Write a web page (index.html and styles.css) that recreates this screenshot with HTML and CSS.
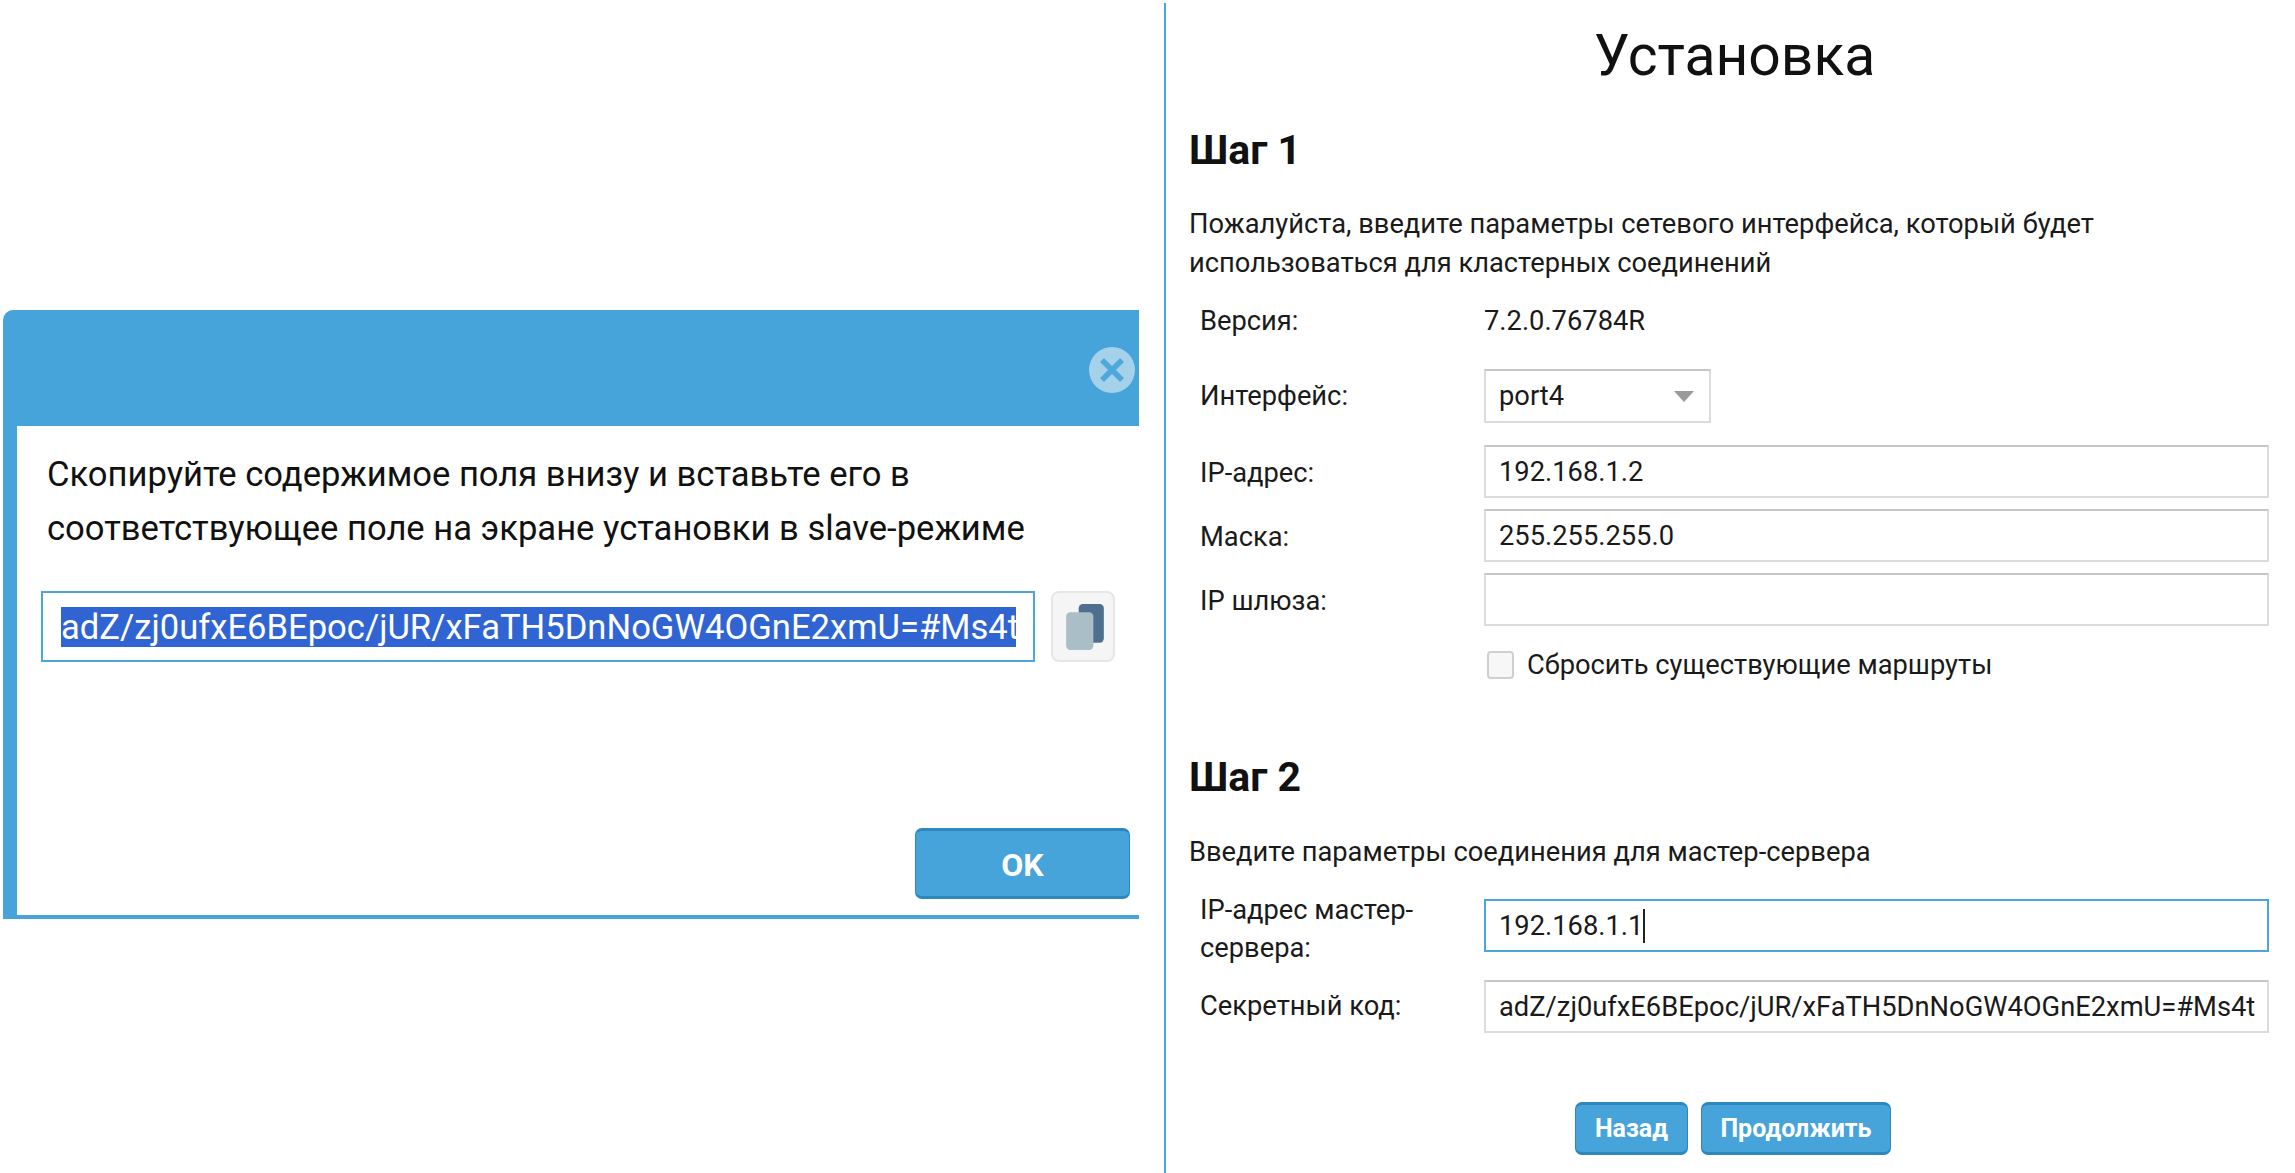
FILE: index.html
```html
<!DOCTYPE html>
<html lang="ru">
<head>
<meta charset="utf-8">
<title>Установка</title>
<link rel="stylesheet" href="styles.css">
</head>
<body>
<div class="page">
  <section class="left">
    <div class="dialog">
      <div class="dialog-head">
        <svg class="close" viewBox="0 0 46 46" aria-hidden="true">
          <circle cx="23" cy="23" r="23" fill="#a5d2ea"/>
          <path d="M13 13 33 33M33 13 13 33" stroke="#4fa8dc" stroke-width="5.5" fill="none"/>
        </svg>
      </div>
      <div class="dialog-body">
        <p class="dialog-text">Скопируйте содержимое поля внизу и вставьте его в<br>соответствующее поле на экране установки в slave-режиме</p>
        <div class="copy-row">
          <div class="copy-field"><span class="selected">adZ/zj0ufxE6BEpoc/jUR/xFaTH5DnNoGW4OGnE2xmU=#Ms4t</span></div>
          <div class="copy-btn">
            <svg viewBox="0 0 36 44" aria-hidden="true">
              <rect x="12" y="0" width="24" height="37" rx="4" fill="#4f6f8f"/>
              <rect x="0" y="8" width="26" height="36" rx="4" fill="#a9bec6"/>
            </svg>
          </div>
        </div>
        <div class="dialog-foot"><div class="btn btn-ok">OK</div></div>
      </div>
    </div>
  </section>
  <section class="right">
    <h1 class="title">Установка</h1>
    <h2 class="step first">Шаг 1</h2>
    <p class="intro">Пожалуйста, введите параметры сетевого интерфейса, который будет<br>использоваться для кластерных соединений</p>
    <div class="row row-version"><div class="label">Версия:</div><div class="value">7.2.0.76784R</div></div>
    <div class="row row-select"><div class="label">Интерфейс:</div><div class="field select">port4<span class="arrow"></span></div></div>
    <div class="row row-ip"><div class="label label-low">IP-адрес:</div><div class="field">192.168.1.2</div></div>
    <div class="row row-tight"><div class="label label-low">Маска:</div><div class="field">255.255.255.0</div></div>
    <div class="row row-tight"><div class="label label-low">IP шлюза:</div><div class="field"></div></div>
    <div class="row row-check"><div></div><div class="check"><span class="box"></span>Сбросить существующие маршруты</div></div>
    <h2 class="step second">Шаг 2</h2>
    <p class="intro intro-two">Введите параметры соединения для мастер-сервера</p>
    <div class="row row-master"><div class="label label-two">IP-адрес мастер-<br>сервера:</div><div class="field focus"><span class="typed">192.168.1.1</span></div></div>
    <div class="row row-secret"><div class="label">Секретный код:</div><div class="field">adZ/zj0ufxE6BEpoc/jUR/xFaTH5DnNoGW4OGnE2xmU=#Ms4t</div></div>
    <div class="actions"><div class="btn btn-back">Назад</div><div class="btn btn-next">Продолжить</div></div>
  </section>
</div>
</body>
</html>
```
FILE: styles.css
```css
* { box-sizing: border-box; }
html, body { margin: 0; padding: 0; height: 100%; background: #fff; }
body { font-family: Roboto, "Liberation Sans", sans-serif; color: #1a1a1a; overflow: hidden; }
.page { display: flex; height: 1173px; }

.left { width: 1164px; flex: none; padding: 310px 25px 0 3px; }
.dialog { height: 609px; display: flex; flex-direction: column; background: #47a4da; border-radius: 10px 0 0 0; }
.dialog-head { height: 116px; flex: none; display: flex; justify-content: flex-end; align-items: center; padding: 4px 4px 0 0; }
.close { width: 46px; height: 46px; }
.dialog-body { flex: 1; margin: 0 0 4px 14px; background: #fff; padding: 21px 9px 16px 24px; display: flex; flex-direction: column; }
.dialog-text { margin: 0 0 36px 6px; font-size: 34.6px; line-height: 54px; color: #111; }
.copy-row { display: flex; gap: 16px; }
.copy-field { width: 994px; height: 71px; border: 2px solid #4aa6dc; padding: 0 18px; display: flex; align-items: center; overflow: hidden; background: #fff; }
.selected { display: block; width: 955px; flex: none; overflow: hidden; white-space: nowrap; background: #3064d3; color: #fff; font-size: 34.6px; line-height: 40px; }
.copy-btn { width: 64px; height: 71px; border: 2px solid #e6e6e6; border-radius: 8px; background: #f5f5f5; display: flex; align-items: center; justify-content: center; padding-left: 3px; }
.copy-btn svg { width: 38px; height: 46px; }
.dialog-foot { margin-top: auto; display: flex; justify-content: flex-end; }

.btn { display: flex; align-items: center; justify-content: center; color: #fff; font-weight: 700; background: #47a4da; border: 1px solid #2d86bd; border-top-width: 3px; border-bottom-width: 3px; border-radius: 7px; }
.btn-ok { width: 215px; height: 71px; font-size: 32px; padding-top: 2px; }
.btn-back { width: 113px; height: 53px; font-size: 25px; }
.btn-next { width: 190px; height: 53px; font-size: 25px; }

.right { flex: 1; margin-top: 3px; border-left: 2px solid #4aa6dc; padding: 13px 26px 0 23px; }
.title { margin: 0; padding-left: 11px; text-align: center; font-weight: 400; font-size: 57px; line-height: 80px; color: #111; }
.step { margin: 0; font-size: 41px; line-height: 50px; font-weight: 700; color: #111; }
.first { margin-top: 29px; }
.second { margin-top: 67px; }
.intro { margin: 30px 0 0; font-size: 27.3px; line-height: 38.5px; color: #1a1a1a; }
.intro-two { margin-top: 31px; }
.row { display: grid; grid-template-columns: 295px 1fr; align-items: center; font-size: 27.3px; line-height: 38px; }
.label { padding-left: 11px; }
.label-low { padding-top: 2px; }
.label-two { margin-top: 4px; }
.row-version { margin-top: 19px; height: 40px; }
.row-select { margin-top: 28px; }
.row-ip { margin-top: 22px; }
.row-tight { margin-top: 11px; }
.row-check { margin-top: 19px; height: 40px; }
.row-master { margin-top: 15px; height: 79px; align-items: start; }
.row-secret { margin-top: 14px; }
.field { height: 53px; border: 2px solid #dcdcdc; border-top-color: #c6c6c6; padding: 1px 13px 0; display: flex; align-items: center; background: #fff; white-space: nowrap; overflow: hidden; }
.select { width: 227px; height: 54px; justify-content: space-between; padding: 0 15px 0 13px; }
.arrow { width: 0; height: 0; border-left: 10px solid transparent; border-right: 10px solid transparent; border-top: 11px solid #9a9a9a; }
.focus { border-color: #4aa6dc; margin-top: 12px; }
.typed { border-right: 2px solid #222; line-height: 34px; }
.check { display: flex; align-items: center; gap: 13px; padding-left: 3px; }
.box { width: 27px; height: 28px; border: 2px solid #cfcfcf; border-radius: 4px; background: #f7f7f7; }
.actions { display: flex; justify-content: center; gap: 13px; margin-top: 69px; padding-left: 8px; }
```
